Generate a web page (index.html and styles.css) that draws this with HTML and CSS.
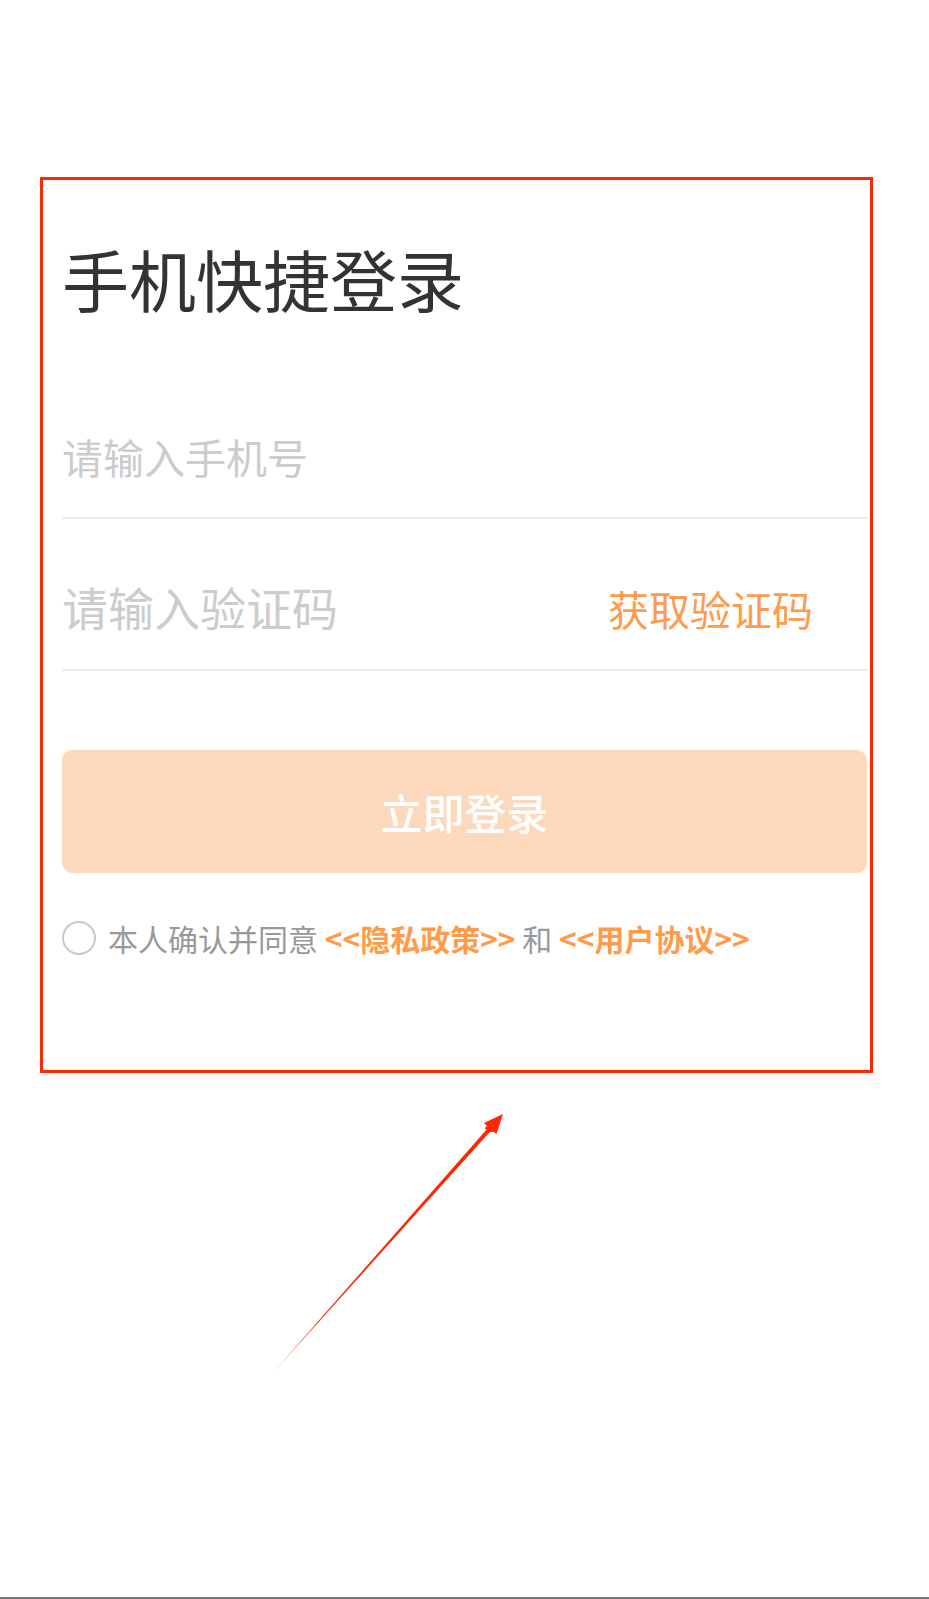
FILE: index.html
```html
<!DOCTYPE html>
<html lang="zh-CN">
<head>
<meta charset="utf-8">
<title>手机快捷登录</title>
<link rel="stylesheet" href="styles.css">
</head>
<body>
<div class="page">
  <div class="frame">
    <h1 class="title">手机快捷登录</h1>
    <div class="field field-phone">
      <span class="placeholder phone">请输入手机号</span>
    </div>
    <div class="field field-code">
      <span class="placeholder code">请输入验证码</span>
      <span class="get-code">获取验证码</span>
    </div>
    <div class="btn">立即登录</div>
    <div class="agree">
      <span class="radio"></span>
      <span class="agree-text">本人确认并同意 <b class="link">&lt;&lt;隐私政策&gt;&gt;</b> 和 <b class="link">&lt;&lt;用户协议&gt;&gt;</b></span>
    </div>
  </div>
  <svg class="arrow" width="260" height="290" viewBox="255 1105 260 290" xmlns="http://www.w3.org/2000/svg">
    <defs>
      <linearGradient id="fade" gradientUnits="userSpaceOnUse" x1="263" y1="1384" x2="420" y2="1207">
        <stop offset="0" stop-color="#ff2600" stop-opacity="0"/>
        <stop offset="0.35" stop-color="#ff2600" stop-opacity="1"/>
        <stop offset="1" stop-color="#ff2600" stop-opacity="1"/>
      </linearGradient>
    </defs>
    <polygon fill="url(#fade)" points="263,1384 488.6,1127.2 491.6,1129.9"/>
    <polygon fill="#ff2600" points="503,1114 496.5,1134 490.5,1129.5 484,1123 "/>
    <polygon fill="#ff2600" points="486.5,1125.8 493.5,1131.8 489.2,1132.2 485,1128.5"/>
  </svg>
</div>
</body>
</html>
```

FILE: styles.css
```css
html, body {
  margin: 0;
  padding: 0;
  background: #ffffff;
}

body {
  font-family: "Noto Sans CJK SC", "Noto Sans", sans-serif;
}

.page {
  position: relative;
  height: 1597px;
  border-bottom: 2px solid #777777;
  overflow: hidden;
}

.frame {
  margin: 177px 0 0 40px;
  width: 833px;
  height: 896px;
  box-sizing: border-box;
  border: 3px solid #ff2600;
  padding: 0 3px 0 19px;
}

.title {
  margin: 0;
  padding-top: 64px;
  font-size: 67px;
  line-height: 67px;
  font-weight: 400;
  color: #333333;
}

.field {
  display: flex;
  align-items: center;
  justify-content: space-between;
  border-bottom: 2px solid #ededed;
}

.field-phone {
  padding: 124px 0 40px;
}

.field-code {
  padding: 62px 0 38px;
}

.placeholder {
  color: #cccccc;
}

.phone {
  font-size: 41px;
  line-height: 42px;
}

.code {
  font-size: 46px;
  line-height: 46px;
}

.get-code {
  font-size: 41px;
  line-height: 46px;
  color: #ff9b4b;
  margin-right: 54px;
  margin-top: 4px;
}

.btn {
  margin-top: 79px;
  height: 123px;
  border-radius: 11px;
  background: #fcd8bc;
  color: #ffffff;
  font-size: 42px;
  font-weight: 500;
  display: flex;
  align-items: center;
  justify-content: center;
}

.agree {
  margin-top: 48px;
  display: flex;
  align-items: center;
  gap: 12px;
}

.radio {
  width: 30px;
  height: 30px;
  border: 2px solid #c9c9c9;
  border-radius: 50%;
  flex: none;
}

.agree-text {
  font-size: 30px;
  line-height: 34px;
  color: #999999;
  white-space: nowrap;
}

.link {
  color: #ff9b4b;
  font-weight: 700;
}

.arrow {
  position: absolute;
  left: 255px;
  top: 1105px;
}
```
